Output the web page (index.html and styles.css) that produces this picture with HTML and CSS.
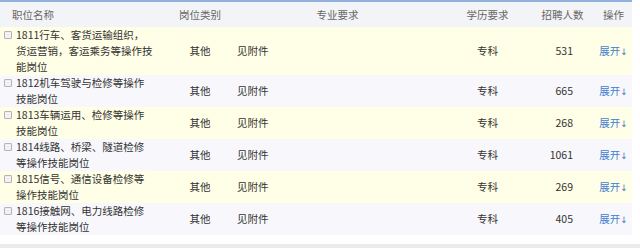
FILE: index.html
```html
<!DOCTYPE html>
<html lang="zh-CN">
<head>
<meta charset="utf-8">
<link rel="stylesheet" href="styles.css">
</head>
<body>
<div class="page">
  <table class="jobs">
    <colgroup>
      <col class="c-name"><col class="c-type"><col class="c-major"><col class="c-edu"><col class="c-num"><col class="c-op">
    </colgroup>
    <thead>
      <tr>
        <th class="h-name">职位名称</th>
        <th>岗位类别</th>
        <th>专业要求</th>
        <th>学历要求</th>
        <th>招聘人数</th>
        <th>操作</th>
      </tr>
    </thead>
    <tbody>
      <tr class="odd">
        <td class="name"><div class="name-wrap"><span class="cb"></span><span class="txt">1811行车、客货运输组织，货运营销，客运乘务等操作技能岗位</span></div></td>
        <td class="center">其他</td>
        <td class="major">见附件</td>
        <td class="center">专科</td>
        <td class="num">531</td>
        <td class="op"><a class="more">展开<span class="arr">↓</span></a></td>
      </tr>
      <tr class="even">
        <td class="name"><div class="name-wrap"><span class="cb"></span><span class="txt">1812机车驾驶与检修等操作技能岗位</span></div></td>
        <td class="center">其他</td>
        <td class="major">见附件</td>
        <td class="center">专科</td>
        <td class="num">665</td>
        <td class="op"><a class="more">展开<span class="arr">↓</span></a></td>
      </tr>
      <tr class="odd">
        <td class="name"><div class="name-wrap"><span class="cb"></span><span class="txt">1813车辆运用、检修等操作技能岗位</span></div></td>
        <td class="center">其他</td>
        <td class="major">见附件</td>
        <td class="center">专科</td>
        <td class="num">268</td>
        <td class="op"><a class="more">展开<span class="arr">↓</span></a></td>
      </tr>
      <tr class="even">
        <td class="name"><div class="name-wrap"><span class="cb"></span><span class="txt">1814线路、桥梁、隧道检修等操作技能岗位</span></div></td>
        <td class="center">其他</td>
        <td class="major">见附件</td>
        <td class="center">专科</td>
        <td class="num">1061</td>
        <td class="op"><a class="more">展开<span class="arr">↓</span></a></td>
      </tr>
      <tr class="odd">
        <td class="name"><div class="name-wrap"><span class="cb"></span><span class="txt">1815信号、通信设备检修等操作技能岗位</span></div></td>
        <td class="center">其他</td>
        <td class="major">见附件</td>
        <td class="center">专科</td>
        <td class="num">269</td>
        <td class="op"><a class="more">展开<span class="arr">↓</span></a></td>
      </tr>
      <tr class="even">
        <td class="name"><div class="name-wrap"><span class="cb"></span><span class="txt">1816接触网、电力线路检修等操作技能岗位</span></div></td>
        <td class="center">其他</td>
        <td class="major">见附件</td>
        <td class="center">专科</td>
        <td class="num">405</td>
        <td class="op"><a class="more">展开<span class="arr">↓</span></a></td>
      </tr>
    </tbody>
  </table>
  <div class="gap"></div>
  <div class="footer-bar"></div>
</div>
</body>
</html>
```
FILE: styles.css
```css
* { box-sizing: border-box; }
html, body { margin: 0; padding: 0; background: #ffffff; }
body {
  font-family: "Noto Sans CJK SC", "Microsoft YaHei", sans-serif;
  font-size: 10.5px;
  color: #333333;
  width: 640px;
  height: 248px;
  overflow: hidden;
}
.page { display: flex; flex-direction: column; height: 248px; }
.jobs {
  width: 632px;
  border-collapse: collapse;
  table-layout: fixed;
  border-top: 2px solid #8fb0dc;
}
.c-name { width: 170px; }
.c-type { width: 60px; }
.c-major { width: 215px; }
.c-edu { width: 85px; }
.c-num { width: 65px; }
.c-op { width: 37px; }

.jobs th {
  height: 26px;
  background: #f3f4f7;
  color: #666666;
  font-weight: normal;
  text-align: center;
  padding: 0;
  white-space: nowrap;
}
.jobs th.h-name { text-align: left; padding-left: 12px; }

.jobs td {
  padding: 0;
  line-height: 16px;
  vertical-align: middle;
}
.odd td { background: #fffee6; }
.even td { background: #f8f8fc; }

.name-wrap { display: flex; align-items: flex-start; padding-left: 4px; }
.cb {
  flex: none;
  width: 8px;
  height: 8px;
  margin-top: 4px;
  margin-right: 4px;
  border: 1px solid #b5b5b5;
  border-radius: 1px;
  background: #f1f1f1;
}
.txt { width: 137.5px; }

.center { text-align: center; }
.major { padding-left: 7px !important; }
.num { text-align: right; padding-right: 22px !important; }
.op { text-align: center; }
.more { color: #3f80cf; text-decoration: none; }
.arr { font-family: "DejaVu Sans", sans-serif; font-size: 9px; }

.gap { flex: 1; }
.footer-bar { height: 4px; background: #ebebeb; }
```
